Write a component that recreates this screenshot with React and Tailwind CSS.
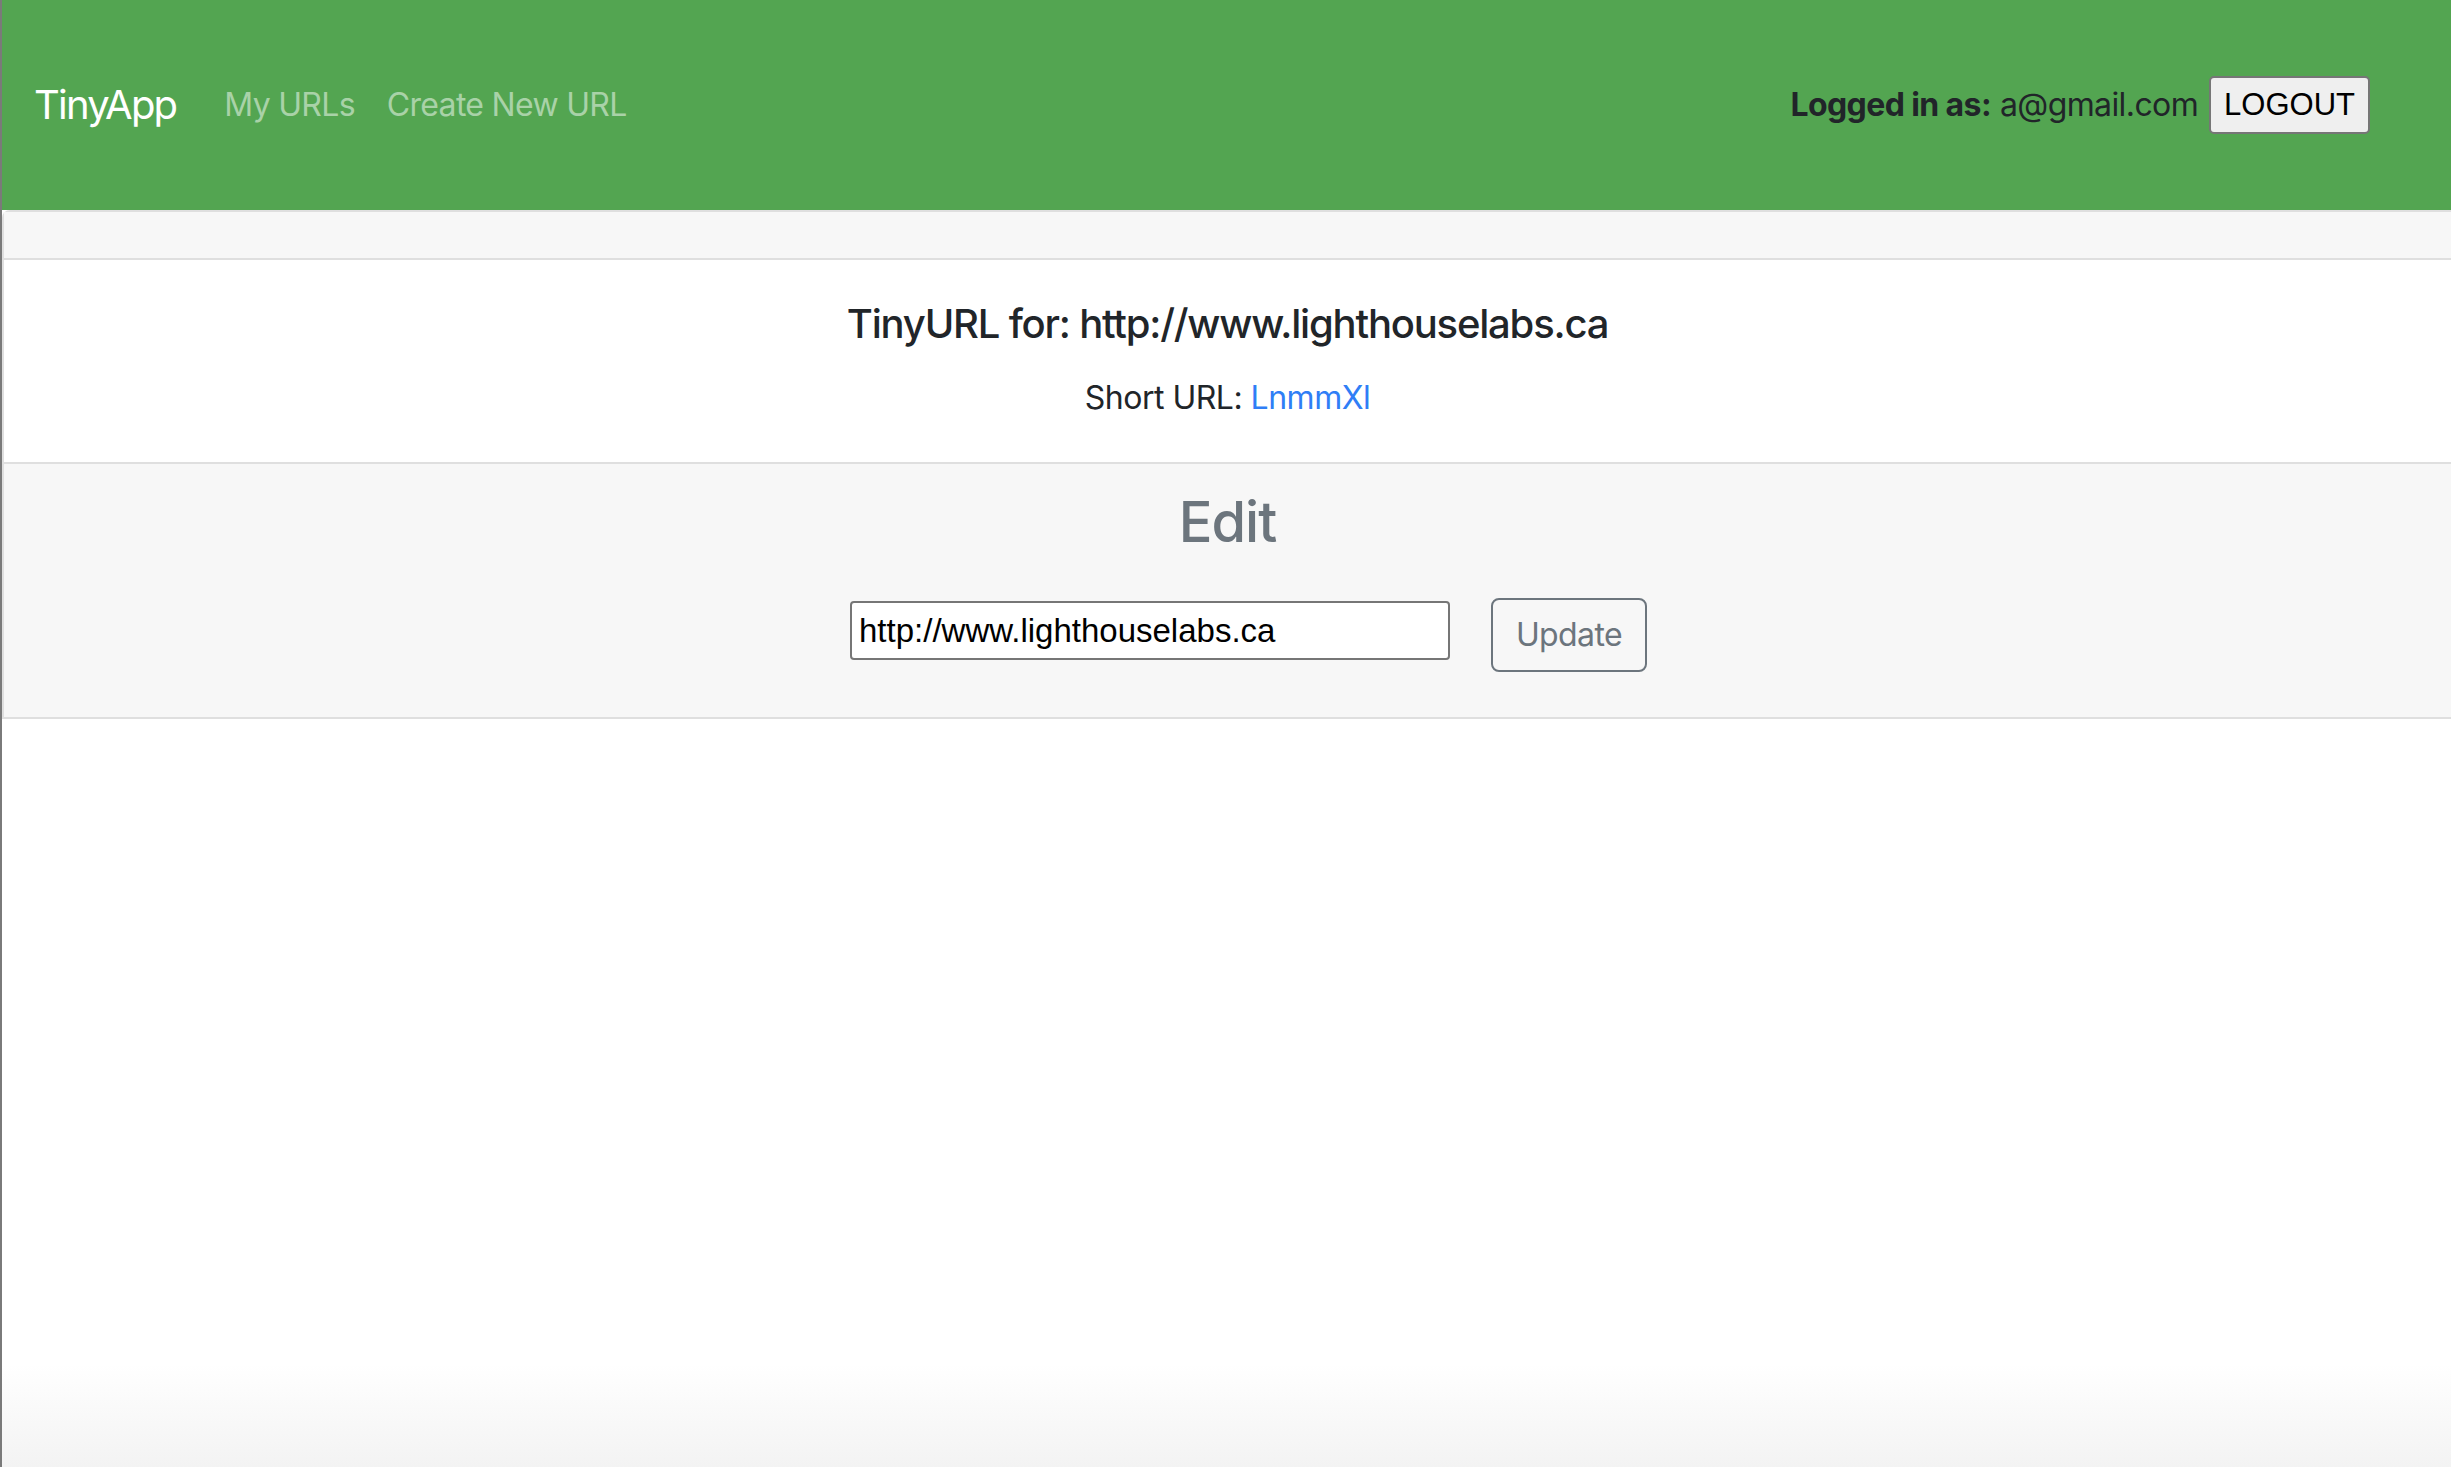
export default function App() {
  const sans = { fontFamily: 'Inter, "Noto Sans", sans-serif' }
  const arial = { fontFamily: '"Liberation Sans", Arial, sans-serif' }

  return (
    <div
      className="min-h-screen flex bg-linear-to-b from-white from-93% to-[#f3f3f3] text-[#212529]"
      style={sans}
    >
      <div className="w-[2px] bg-[#7a7a7a] shrink-0" />
      <div className="flex-1 flex flex-col">
        <nav className="h-[210px] bg-[#53a551] flex items-center pl-[32px] pr-[81px]">
          <a className="text-[40px] text-white tracking-[-1.8px] mr-[32px]">TinyApp</a>
          <a className="text-[32px] text-[#a9d2a8] px-[16px] tracking-[-0.7px]">My URLs</a>
          <a className="text-[32px] text-[#a9d2a8] px-[16px] tracking-[-0.7px]">Create New URL</a>
          <div className="ml-auto flex items-center text-[32px] tracking-[-0.6px]">
            <span className="font-bold">Logged in as:</span>
            <span className="ml-[9px]">a@gmail.com</span>
            <button
              className="ml-[11px] h-[58px] px-[13px] bg-[#efefef] border-2 border-[#767676] rounded-[5px] text-[31px] text-black tracking-normal"
              style={arial}
            >
              LOGOUT
            </button>
          </div>
        </nav>

        <div className="border-2 border-r-0 border-[#dfdfdf] rounded-tl-[8px] text-center">
          <div className="h-[48px] bg-[#f7f7f7] border-b-2 border-[#dfdfdf]" />
          <div className="bg-white py-[40px]">
            <h5 className="text-[40px] leading-[48px] font-medium tracking-[-1.2px]">
              TinyURL for: http://www.lighthouselabs.ca
            </h5>
            <p className="mt-[26px] text-[32px] leading-[48px] tracking-[-0.5px]">
              Short URL: <a className="text-[#2f7ef6]">LnmmXl</a>
            </p>
          </div>
          <div className="bg-[#f7f7f7] border-t-2 border-[#dfdfdf] pt-[25px] pb-[45px]">
            <h3 className="text-[56px] leading-[67px] font-medium text-[#6c757d] tracking-[-1px]">
              Edit
            </h3>
            <form className="mt-[42px] flex items-start justify-center pl-[42px]">
              <input
                defaultValue="http://www.lighthouselabs.ca"
                className="mt-[3px] w-[600px] h-[59px] bg-white border-2 border-[#767676] rounded-[4px] px-[7px] text-[33px] text-black outline-none"
                style={arial}
              />
              <button
                type="button"
                className="ml-[41px] w-[156px] h-[74px] border-2 border-[#6c757d] rounded-[8px] text-[32px] text-[#6c757d] tracking-[-0.6px]"
              >
                Update
              </button>
            </form>
          </div>
        </div>
      </div>
    </div>
  )
}
